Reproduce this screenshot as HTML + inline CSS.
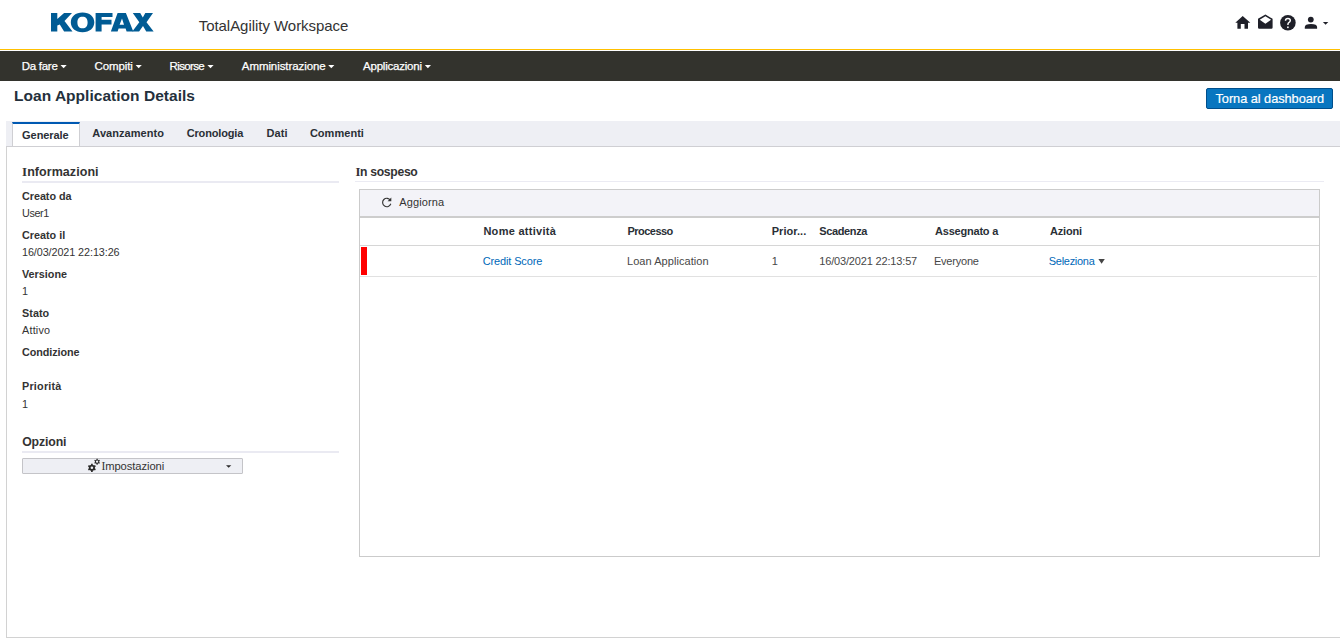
<!DOCTYPE html>
<html><head><meta charset="utf-8">
<style>
*{box-sizing:border-box;margin:0;padding:0}
html,body{width:1340px;height:639px;overflow:hidden;background:#fff;font-family:"Liberation Sans",sans-serif;color:#333}
.t{position:absolute;white-space:nowrap}
.r{position:absolute}
svg{position:absolute;overflow:visible}
</style></head><body>
<!-- header -->
<div class="r" style="left:0;top:49px;width:1340px;height:1px;background:#ffc000"></div>
<svg style="left:50.5px;top:13.1px" width="103" height="19" viewBox="0 0 103 19">
<g fill="#005b94">
<path d="M0,0 H6.3 V5.9 L13.1,0 H21 L13.5,7.9 L21.5,18.6 H13.1 L8.8,11.4 L6.3,12.5 V18.6 H0 Z"/>
<path fill-rule="evenodd" d="M31.55,-0.5499999999999989 C38.60,-0.5499999999999989 43.3,3.39 43.3,9.3 C43.3,15.21 38.60,19.15 31.55,19.15 C24.50,19.15 19.8,15.21 19.8,9.3 C19.8,3.39 24.50,-0.5499999999999989 31.55,-0.5499999999999989 Z M31.5,3.7 C34.87,3.7 36.6,5.67 36.6,9.5 C36.6,13.33 34.87,15.3 31.5,15.3 C28.13,15.3 26.4,13.33 26.4,9.5 C26.4,5.67 28.13,3.7 31.5,3.7 Z"/>
<path d="M44.6,0 H61.5 V4.1 H50.6 V6.8 H60.5 V11.5 H50.6 V18.5 H44.6 Z"/>
<path fill-rule="evenodd" d="M66.6,0 H74.9 L82.3,18.5 H75.6 L74.6,15.6 H67.6 L66.6,18.5 H59.85 Z M71,5.5 L73,11.7 H68.6 Z"/>
<path d="M81.8,0 H89.2 L91.8,4.5 L94.3,0 H102 L95.5,9.2 L102.65,18.5 H95.25 L92,13.1 L88.1,18.5 H81.3 L88.3,9.2 Z"/>
</g>
</svg>
<!-- header icons -->
<svg style="left:0;top:0" width="1340" height="50" viewBox="0 0 1340 50">
<g fill="#1f2029">
<path d="M1242.7,16 L1250.3,22.8 H1248 V28.8 H1244.5 V24 H1240.8 V28.8 H1237.4 V22.8 H1235.3 Z"/>
<path fill-rule="evenodd" d="M1265.4,14.6 L1272.6,18.8 V27.6 Q1272.6,28.8 1271.4,28.8 H1259.2 Q1258,28.8 1258,27.6 V18.8 Z M1265.4,16.3 L1259.7,19.7 L1265.4,23.7 L1271.1,19.7 Z"/>
<circle cx="1287.9" cy="22.7" r="7.8"/>
<circle cx="1310.8" cy="19.6" r="2.9"/>
<path d="M1304.8,28.8 V27 Q1304.8,24.1 1311,24.1 Q1317.1,24.1 1317.1,27 V28.8 Z"/>
<path d="M1322.9,21.9 H1328.3 L1325.6,24.8 Z"/>
</g>
<path d="M1285.5,20.7 Q1285.5,18.5 1287.9,18.5 Q1290.3,18.5 1290.3,20.5 Q1290.3,21.9 1288.8,22.6 Q1287.9,23.1 1287.9,24.9" fill="none" stroke="#fff" stroke-width="1.45"/>
<rect x="1287.1" y="26.5" width="1.6" height="1.6" fill="#fff"/>
</svg>
<!-- nav -->
<div class="r" style="left:0;top:51px;width:1340px;height:30px;background:#33332d"></div>
<svg style="left:0;top:0" width="1340" height="90" viewBox="0 0 1340 90">
<g fill="#fff">
<path d="M60.5,65 H66.7 L63.6,68.3 Z"/>
<path d="M135.6,65 H141.8 L138.7,68.3 Z"/>
<path d="M207.4,65 H213.6 L210.5,68.3 Z"/>
<path d="M328.2,65 H334.4 L331.3,68.3 Z"/>
<path d="M424.8,65 H431 L427.9,68.3 Z"/>
</g>
</svg>
<!-- dashboard button -->
<div class="r" style="left:1206px;top:88px;width:127px;height:21px;background:#0876c0;border:1px solid #004f8c;border-radius:2px"></div>
<!-- tabs -->
<div class="r" style="left:6px;top:121px;width:1334px;height:26px;background:#eeeff4;border-bottom:1px solid #cfcfd3"></div>
<div class="r" style="left:12px;top:122px;width:68px;height:24px;background:#fff;border-left:1px solid #cfcfd3;border-right:1px solid #cfcfd3;border-top:2px solid #0059b2"></div>
<!-- panel -->
<div class="r" style="left:6px;top:147px;width:1400px;height:491px;border-left:1px solid #d2d2d2;border-bottom:1px solid #d2d2d2"></div>
<div class="r" style="left:22px;top:181px;width:317px;height:2px;background:#eaeaf2"></div>
<div class="r" style="left:22px;top:451px;width:317px;height:2px;background:#eaeaf2"></div>
<!-- impostazioni -->
<div class="r" style="left:22px;top:458px;width:221px;height:16px;background:#eeeff4;border:1px solid #c4c4c8;border-radius:1px"></div>
<svg style="left:0;top:0" width="300" height="480" viewBox="0 0 300 480">
<g fill="#2a2a2a">
<path fill-rule="evenodd" d="M90.70,464.94 L91.10,464.81 L91.03,463.69 L92.77,463.69 L92.70,464.81 L93.10,464.94 L93.77,465.33 L94.09,465.61 L95.02,464.99 L95.89,466.50 L94.89,467.00 L94.98,467.41 L94.98,468.19 L94.89,468.60 L95.89,469.10 L95.02,470.61 L94.09,469.99 L93.77,470.27 L93.10,470.66 L92.70,470.79 L92.77,471.91 L91.03,471.91 L91.10,470.79 L90.70,470.66 L90.03,470.27 L89.71,469.99 L88.78,470.61 L87.91,469.10 L88.91,468.60 L88.82,468.19 L88.82,467.41 L88.91,467.00 L87.91,466.50 L88.78,464.99 L89.71,465.61 L90.03,465.33 Z M93.20,467.80 A1.3,1.3 0 1 0 90.60,467.80 A1.3,1.3 0 1 0 93.20,467.80 Z"/>
<path fill-rule="evenodd" d="M96.25,459.67 L96.53,459.57 L96.48,458.77 L97.72,458.77 L97.67,459.57 L97.95,459.67 L98.43,459.95 L98.66,460.14 L99.33,459.69 L99.95,460.77 L99.23,461.13 L99.28,461.42 L99.28,461.98 L99.23,462.27 L99.95,462.63 L99.33,463.71 L98.66,463.26 L98.43,463.45 L97.95,463.73 L97.67,463.83 L97.72,464.63 L96.48,464.63 L96.53,463.83 L96.25,463.73 L95.77,463.45 L95.54,463.26 L94.87,463.71 L94.25,462.63 L94.97,462.27 L94.92,461.98 L94.92,461.42 L94.97,461.13 L94.25,460.77 L94.87,459.69 L95.54,460.14 L95.77,459.95 Z M98.25,461.70 A1.15,1.15 0 1 0 95.95,461.70 A1.15,1.15 0 1 0 98.25,461.70 Z"/>
<path d="M226,465.3 H231.3 L228.65,467.8 Z"/>
</g>
</svg>
<!-- right column -->
<div class="r" style="left:355px;top:181px;width:969px;height:1px;background:#ebebf3"></div>
<div class="r" style="left:359px;top:189px;width:961px;height:368px;border:1px solid #cbcbcb"></div>
<div class="r" style="left:360px;top:190px;width:959px;height:26px;background:#f3f3f8"></div>
<div class="r" style="left:360px;top:216px;width:959px;height:2px;background:#cdcdcd"></div>
<div class="r" style="left:360px;top:245px;width:959px;height:1px;background:#d6d6d6"></div>
<div class="r" style="left:360px;top:276px;width:957px;height:1px;background:#e1e1e1"></div>
<div class="r" style="left:361px;top:247px;width:6px;height:28px;background:#ff0000"></div>
<svg style="left:0;top:0" width="1340" height="300" viewBox="0 0 1340 300">
<path d="M390.4,200.3 A4.2,4.2 0 1 0 390.8,203.8" fill="none" stroke="#333" stroke-width="1.15"/>
<path d="M391.3,197.6 V201.3 H387.6 Z" fill="#333"/>
<path d="M1098.4,258.9 H1104.8 L1101.6,263.7 Z" fill="#444"/>
</svg>
<div class="t" style="left:198.70px;top:18.20px;font-size:15px;line-height:15px;letter-spacing:-0.043px;color:#333;">TotalAgility Workspace</div>
<div class="t" style="left:21.70px;top:60.86px;font-size:11.5px;line-height:11.5px;letter-spacing:-0.270px;color:#fff;-webkit-text-stroke:0.25px #fff;">Da fare</div>
<div class="t" style="left:94.60px;top:60.86px;font-size:11.5px;line-height:11.5px;letter-spacing:-0.114px;color:#fff;-webkit-text-stroke:0.25px #fff;">Compiti</div>
<div class="t" style="left:169.60px;top:60.86px;font-size:11.5px;line-height:11.5px;letter-spacing:-0.648px;color:#fff;-webkit-text-stroke:0.25px #fff;">Risorse</div>
<div class="t" style="left:241.80px;top:60.86px;font-size:11.5px;line-height:11.5px;letter-spacing:-0.078px;color:#fff;-webkit-text-stroke:0.25px #fff;">Amministrazione</div>
<div class="t" style="left:363.00px;top:60.86px;font-size:11.5px;line-height:11.5px;letter-spacing:-0.214px;color:#fff;-webkit-text-stroke:0.25px #fff;">Applicazioni</div>
<div class="t" style="left:14.00px;top:87.68px;font-size:15.5px;line-height:15.5px;letter-spacing:0.028px;font-weight:bold;color:#24303c;">Loan Application Details</div>
<div class="t" style="left:1215.50px;top:92.76px;font-size:12.8px;line-height:12.8px;letter-spacing:-0.057px;color:#fff;-webkit-text-stroke:0.2px #fff;">Torna al dashboard</div>
<div class="t" style="left:22.10px;top:130.09px;font-size:11px;line-height:11px;letter-spacing:-0.069px;font-weight:bold;color:#2a2f36;">Generale</div>
<div class="t" style="left:92.30px;top:128.09px;font-size:11px;line-height:11px;letter-spacing:0.049px;font-weight:bold;color:#2a2f36;">Avanzamento</div>
<div class="t" style="left:186.70px;top:128.09px;font-size:11px;line-height:11px;letter-spacing:-0.159px;font-weight:bold;color:#2a2f36;">Cronologia</div>
<div class="t" style="left:266.60px;top:128.09px;font-size:11px;line-height:11px;letter-spacing:0.037px;font-weight:bold;color:#2a2f36;">Dati</div>
<div class="t" style="left:309.90px;top:128.09px;font-size:11px;line-height:11px;letter-spacing:0.030px;font-weight:bold;color:#2a2f36;">Commenti</div>
<div class="t" style="left:22.00px;top:166.02px;font-size:12.5px;line-height:12.5px;letter-spacing:0.064px;font-weight:bold;color:#333;"><span style="font-family:'Liberation Serif',serif;font-size:1.04em;line-height:1px;vertical-align:baseline">I</span>nformazioni</div>
<div class="t" style="left:22.00px;top:190.56px;font-size:10.8px;line-height:10.8px;letter-spacing:-0.037px;font-weight:bold;color:#333;">Creato da</div>
<div class="t" style="left:22.00px;top:229.86px;font-size:10.8px;line-height:10.8px;letter-spacing:0.000px;font-weight:bold;color:#333;">Creato il</div>
<div class="t" style="left:22.00px;top:268.86px;font-size:10.8px;line-height:10.8px;letter-spacing:-0.005px;font-weight:bold;color:#333;">Versione</div>
<div class="t" style="left:22.00px;top:307.76px;font-size:10.8px;line-height:10.8px;letter-spacing:0.050px;font-weight:bold;color:#333;">Stato</div>
<div class="t" style="left:22.00px;top:346.86px;font-size:10.8px;line-height:10.8px;letter-spacing:-0.079px;font-weight:bold;color:#333;">Condizione</div>
<div class="t" style="left:22.00px;top:380.76px;font-size:10.8px;line-height:10.8px;letter-spacing:0.221px;font-weight:bold;color:#333;">Priorità</div>
<div class="t" style="left:22.00px;top:207.96px;font-size:10.8px;line-height:10.8px;letter-spacing:-0.409px;color:#333;">User1</div>
<div class="t" style="left:22.00px;top:246.56px;font-size:10.8px;line-height:10.8px;letter-spacing:-0.083px;color:#333;">16/03/2021 22:13:26</div>
<div class="t" style="left:22.00px;top:285.66px;font-size:10.8px;line-height:10.8px;letter-spacing:0.000px;color:#333;">1</div>
<div class="t" style="left:22.00px;top:324.86px;font-size:10.8px;line-height:10.8px;letter-spacing:0.220px;color:#333;">Attivo</div>
<div class="t" style="left:22.00px;top:398.56px;font-size:10.8px;line-height:10.8px;letter-spacing:0.000px;color:#333;">1</div>
<div class="t" style="left:22.20px;top:435.69px;font-size:12.3px;line-height:12.3px;letter-spacing:-0.130px;font-weight:bold;color:#333;">Opzioni</div>
<div class="t" style="left:101.40px;top:460.92px;font-size:11.2px;line-height:11.2px;letter-spacing:-0.064px;color:#333;"><span style="font-family:'Liberation Serif',serif;font-size:1.04em;line-height:1px;vertical-align:baseline">I</span>mpostazioni</div>
<div class="t" style="left:355.40px;top:166.27px;font-size:12.2px;line-height:12.2px;letter-spacing:-0.310px;font-weight:bold;color:#333;"><span style="font-family:'Liberation Serif',serif;font-size:1.04em;line-height:1px;vertical-align:baseline">I</span>n sospeso</div>
<div class="t" style="left:399.20px;top:196.69px;font-size:11px;line-height:11px;letter-spacing:0.135px;color:#333;">Aggiorna</div>
<div class="t" style="left:483.40px;top:225.89px;font-size:11px;line-height:11px;letter-spacing:0.289px;font-weight:bold;color:#2a2f36;">Nome attività</div>
<div class="t" style="left:627.50px;top:225.89px;font-size:11px;line-height:11px;letter-spacing:-0.536px;font-weight:bold;color:#2a2f36;">Processo</div>
<div class="t" style="left:771.70px;top:225.89px;font-size:11px;line-height:11px;letter-spacing:0.041px;font-weight:bold;color:#2a2f36;">Prior...</div>
<div class="t" style="left:819.30px;top:225.89px;font-size:11px;line-height:11px;letter-spacing:-0.374px;font-weight:bold;color:#2a2f36;">Scadenza</div>
<div class="t" style="left:935.10px;top:225.89px;font-size:11px;line-height:11px;letter-spacing:-0.221px;font-weight:bold;color:#2a2f36;">Assegnato a</div>
<div class="t" style="left:1050.00px;top:225.89px;font-size:11px;line-height:11px;letter-spacing:-0.200px;font-weight:bold;color:#2a2f36;">Azioni</div>
<div class="t" style="left:482.80px;top:255.69px;font-size:11px;line-height:11px;letter-spacing:-0.151px;color:#0068b8;">Credit Score</div>
<div class="t" style="left:627.00px;top:255.69px;font-size:11px;line-height:11px;letter-spacing:0.057px;color:#474747;">Loan Application</div>
<div class="t" style="left:819.30px;top:255.69px;font-size:11px;line-height:11px;letter-spacing:-0.168px;color:#474747;">16/03/2021 22:13:57</div>
<div class="t" style="left:933.90px;top:255.69px;font-size:11px;line-height:11px;letter-spacing:-0.196px;color:#474747;">Everyone</div>
<div class="t" style="left:1048.80px;top:255.69px;font-size:11px;line-height:11px;letter-spacing:-0.293px;color:#0068b8;">Seleziona</div>
<div class="t" style="left:771.70px;top:255.69px;font-size:11px;line-height:11px;letter-spacing:0.000px;color:#474747;">1</div>
</body></html>
